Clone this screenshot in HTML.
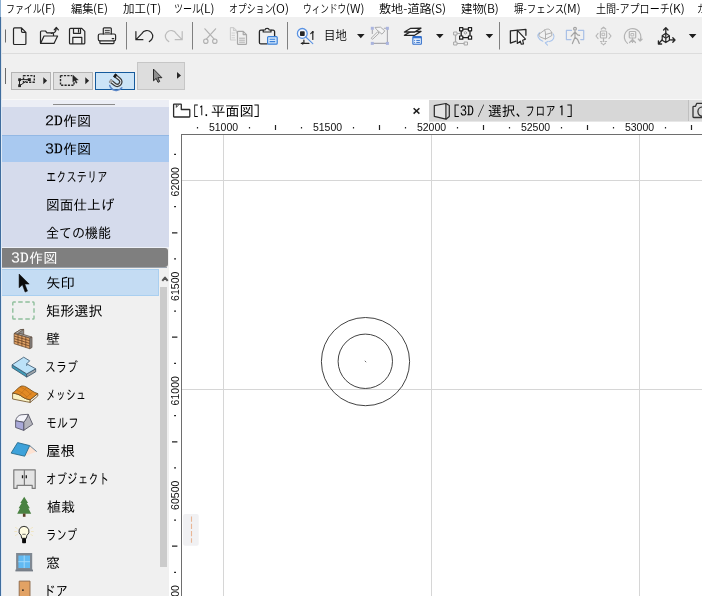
<!DOCTYPE html>
<html lang="ja">
<head>
<meta charset="utf-8">
<title>ARCHICAD</title>
<style>
html,body{margin:0;padding:0;background:#fff;overflow:hidden}
#root{position:relative;width:702px;height:596px;overflow:hidden;background:#f0f0f0;font-family:"IPAGothic","Noto Sans CJK JP",sans-serif}
.t{position:absolute;white-space:pre;line-height:1;transform-origin:0 50%}
.n{font-family:"Noto Sans CJK JP","IPAGothic",sans-serif;font-weight:350}
.s{display:inline-block;transform-origin:0 50%}
#txt{position:absolute;left:0;top:0;width:702px;height:596px;will-change:opacity}
.b{position:absolute}
svg{position:absolute;left:0;top:0;overflow:visible}
</style>
</head>

<body>
<div id="root">
<!-- menu bar -->
<div class="b" style="left:0;top:0;width:702px;height:17px;background:#fff"></div>
<!-- toolbars -->
<div class="b" style="left:0;top:17px;width:702px;height:83px;background:#f0f0f0"></div>
<div class="b" style="left:0;top:53px;width:702px;height:1px;background:#dcdcdc"></div>
<div class="b" style="left:0;top:99px;width:702px;height:1px;background:#f8f8f8"></div>
<!-- toolbar2 buttons -->
<div class="b" style="left:11px;top:72px;width:38px;height:16px;background:#e1e1e1;border:1px solid #b4b4b4"></div>
<div class="b" style="left:53px;top:72px;width:38px;height:16px;background:#e1e1e1;border:1px solid #b4b4b4"></div>
<div class="b" style="left:95px;top:72px;width:38px;height:16px;background:#cce4f7;border:1px solid #155a9c"></div>
<div class="b" style="left:137px;top:62px;width:46px;height:26px;background:#dddddd;border:1px solid #c6c6c6"></div>
<svg width="702" height="100" viewBox="0 0 702 100" fill="none" stroke="#262626" stroke-width="1.200" stroke-linecap="round" stroke-linejoin="round">
<!-- grips -->
<path d="M5.500 29.500V42.500M5.500 68V84" stroke="#6a6a6a" stroke-width="1" stroke-linecap="butt"/>
<!-- separators -->
<path d="M126.500 22V49.500M192.500 22V49.500M287.500 22V49.500M499.500 22V49.500" stroke="#808080" stroke-width="1" stroke-linecap="butt"/>
<!-- new -->
<path d="M14.500 27.900h7l4.400 4.400v11.200a1 1 0 0 1-1 1h-10.400a1 1 0 0 1-1-1v-14.600a1 1 0 0 1 1-1zM21.500 28v3.300a1 1 0 0 0 1 1h3.300"/>
<!-- open -->
<path d="M40.500 43v-11a1 1 0 0 1 1-1h4l1.500 1.800h5.500a1 1 0 0 1 1 1v2.200M40.600 43.400l3.400-7.400h13.600l-3.600 7.400zM51.300 33.400c3 0 4.800-2 5-5.400M54.200 29.800l2.100-2.300 2.100 2.300"/>
<!-- save -->
<path d="M70.500 28.400h11.300l3 3v11.500a1 1 0 0 1-1 1h-13.300a1 1 0 0 1-1-1v-13.500a1 1 0 0 1 1-1zM73.500 28.500v4.800h7v-4.800M78.500 29.500v2.500M72.800 43.800v-6.500h9v6.500"/>
<!-- print -->
<path d="M103.300 34v-5.300a.8 .8 0 0 1 .8-.8h6.400a.8 .8 0 0 1 .8 .8v5.300"/>
<path d="M105.200 30.400h4.200M105.200 32.300h4.200" stroke-width=".9"/>
<rect x="98.300" y="34" width="17.300" height="6.800" rx="1.600"/>
<path d="M99.900 41v1.800a.8 .8 0 0 0 .8 .8h12.500a.8 .8 0 0 0 .8-.8v-1.800M112.200 38.600h1.500"/>
<!-- undo -->
<path d="M135.900 31.600v8.100h7M136.300 39.300l5.500-5.700a5.800 5.800 0 1 1 7.500 8"/>
<!-- redo (disabled) -->
<path d="M182.200 31.600v8.100h-7M181.800 39.300l-5.500-5.700a5.800 5.800 0 1 0-7.500 8" stroke="#bcbcbc"/>
<!-- cut (disabled) -->
<g stroke="#b2b2b2"><path d="M204.900 28.800l9.300 10.400M215.600 28.800l-9.300 10.400"/><circle cx="205.800" cy="41.200" r="2.200"/><circle cx="214.800" cy="41.200" r="2.200"/></g>
<!-- copy (disabled) -->
<g stroke="#cdcdcd" stroke-width="1.100"><path d="M236.400 33v-2.500l-2.900-2.900h-2.600a.5 .5 0 0 0-.5 .5v11.400a.5 .5 0 0 0 .5 .5h4.500M233.500 27.800v2.700h2.700"/><path d="M232 33h2.500M232 35.400h2.500M232 37.800h2.500" stroke-width=".9"/></g>
<g stroke="#a8a8a8" stroke-width="1.200"><path d="M238 31.300h5.200l3.300 3.300v9.200a.5 .5 0 0 1-.5 .5h-8a.5 .5 0 0 1-.5-.5v-12a.5 .5 0 0 1 .5-.5zM243.200 31.500v3.100h3.100" fill="#f0f0f0"/><path d="M239.500 38.200h5M239.500 40.200h5M239.500 42.200h5" stroke-width=".9"/></g>
<!-- paste -->
<path d="M263 30.200h-2.100a1.500 1.500 0 0 0-1.500 1.500v10.700a1.500 1.500 0 0 0 1.500 1.500h6M271.200 30.200h1.900a1.500 1.500 0 0 1 1.500 1.500v4.300" stroke-width="1.300"/>
<path d="M263.200 32v-2h1.800c.2-2.300 4-2.300 4.200 0h1.800v2z" stroke-width="1.200"/>
<rect x="267.600" y="36.600" width="9.600" height="7.600" rx="1" stroke="#3a80d8" fill="#d4e7fb"/>
<path d="M269.600 39.300h5.600M269.600 41.600h5.600" stroke="#3a80d8" stroke-width="1.100" stroke-linecap="butt"/>
<!-- zoom to selection -->
<circle cx="302.300" cy="33.400" r="4.900" stroke="#5a92e2" stroke-width="1.300" fill="#f4f8fd"/>
<rect x="300" y="31.300" width="4.700" height="4.700" rx=".8" fill="#262626" stroke="none"/>
<path d="M305.800 37l7 6.600" stroke="#5a92e2" stroke-width="1.100"/>
<path d="M312.800 32v7.400M310.700 33.600l2.100-1.800M303.900 40v3.400h5M301.300 43.400h2.600" stroke="#262626" stroke-width="1.200"/>
<circle cx="312.800" cy="31.900" r="1" fill="#262626" stroke="none"/>
<path d="M303.200 41.700l-2.200 1.700 2.200 1.700z" fill="#262626" stroke="none"/>
<!-- dropdown arrows -->
<g fill="#1e1e1e" stroke="none"><path d="M357 34h7.600l-3.800 4.200zM436 34h7.600l-3.800 4.200zM485.600 34h7.600l-3.800 4.200zM688.800 34h7.600l-3.800 4.200z"/></g>
<!-- hammer (disabled bluish) -->
<path d="M384.300 28.300h3.100v15.100h-15.100M372.300 30v3.500" stroke="#a9a9ae" stroke-width="1.100"/>
<path d="M377.300 32.100l-5.900 5.900a1 1 0 0 0 1.400 1.100l6.100-5.800z" stroke="#a4a4a4" stroke-width=".9" fill="#f4f4f4"/>
<path d="M375.400 27.400l5.200-.2 4.200 3.700-2.800 3.300-5-4.200z" stroke="#a4a4a4" stroke-width=".9" fill="#f4f4f4"/>
<g fill="#aab4de" stroke="none"><rect x="370.800" y="26.800" width="3" height="3"/><rect x="385.900" y="26.800" width="3" height="3"/><rect x="370.800" y="41.900" width="3" height="3"/><rect x="385.900" y="41.900" width="3" height="3"/></g>
<!-- layers -->
<path d="M404.400 35.300l6.300-3.700 10.300-.2-6.400 3.900z" fill="#fafafa" stroke-width="1.300"/>
<path d="M404.400 32l6.300-3.700 10.300-.2-6.400 3.900z" fill="#fafafa" stroke-width="1.300"/>
<rect x="412.300" y="36.100" width="9.600" height="8.700" rx="1" stroke="none" fill="#326fcb"/>
<rect x="413.400" y="38.300" width="7.400" height="5.400" fill="#eaf4ff" stroke="none"/>
<path d="M414.200 40.400h.9M416.300 40.400h3.600M414.200 42.400h.9M416.300 42.400h3.600" stroke="#326fcb" stroke-width="1" stroke-linecap="butt"/>
<!-- group suspend -->
<path d="M455.500 35v8.500h9.500M457.500 33.500h2" stroke="#a8a8a8"/>
<g fill="#f0f0f0" stroke="#a8a8a8" stroke-width="1"><rect x="454" y="32" width="3" height="3"/><rect x="454" y="42" width="3" height="3"/><rect x="464.500" y="42" width="3" height="3"/></g>
<rect x="461.200" y="29.200" width="8.800" height="8.400" stroke="#1e1e1e" stroke-width="1.300" fill="#f0f0f0"/>
<g fill="#fff" stroke="#1e1e1e" stroke-width="1.200"><rect x="459.600" y="27.600" width="3.200" height="3.200"/><rect x="468.400" y="27.600" width="3.200" height="3.200"/><rect x="459.600" y="36" width="3.200" height="3.200"/><rect x="468.400" y="36" width="3.200" height="3.200"/></g>
<circle cx="465.400" cy="32.800" r="1.200" stroke="#999" stroke-width=".9"/>
<!-- select element -->
<path d="M510.400 30.800l15.500-1.500v6M510.400 30.800v12.300l5.600-2" stroke-width="1.300"/>
<path d="M517.300 30.300v13.200l3-2.400 .9 3.100 2.300-.4-.8-3.500 2.800-1.200z" fill="#fafafa" stroke-width="1.200"/>
<!-- orbit (disabled) -->
<path d="M539.400 32.600c-2.800 2.600-1.800 6.400 3.400 8.600M549.500 41.600c4-1.400 5.600-4.600 3.800-7.600M548.300 41.300l-3 1.500 2.200 2.300" stroke="#a9c4ec" stroke-width="1.100"/>
<path d="M539.300 33.900l5.400-3.900c1.500-.9 2.700-1 4-.8 1.400.5 2.400 1.800 3.100 3.600v2.800l-6.300 3.500-5.600-2.300c-.9-.8-1.200-1.900-.6-2.900zM544.700 30c.6 1.400.9 2.900.8 4.500l6.300-1.700M545.500 34.500v4.600" stroke="#a6a6a6" stroke-width=".9" fill="#f2f2f2"/>
<!-- walk (disabled) -->
<path d="M571.500 30.400h-5.100v9.200h4.600M578.500 30.400h5.200v9.200h-3" stroke="#a9c0e6"/>
<g stroke="#a2a2a2"><circle cx="575" cy="28.700" r="1.400"/><path d="M575 31v6.200l-2.600 6.400M575 37.200l2.600 2.300 1.700 4M571.200 36.200l3.800-4.400 2.600 3 2 .5"/></g>
<!-- look (disabled) -->
<g stroke="#b4b4b4"><rect x="600.400" y="31" width="6.200" height="7" rx="1"/><rect x="602.300" y="33.200" width="2.400" height="2.400" stroke-width=".9"/><path d="M603.500 38v3.500M598 33.500l-2 2.500 2 2.500M609 33.500l2 2.500-2 2.500M601.300 29l2.200-1.800 2.200 1.800"/><path d="M601.300 43l2.200 1.800 2.200-1.800" stroke-dasharray="1 1.200"/><path d="M600.500 41.500h6" stroke-dasharray="1 1.500"/></g>
<!-- rotate (disabled) -->
<g stroke="#b4b4b4"><path d="M627.500 43.400a8.300 8.300 0 1 1 12.600-3M638.300 39l1.800 2 2-1.800"/><rect x="629.300" y="31.500" width="6.400" height="6.500" rx=".8"/><rect x="631.300" y="33.500" width="2.400" height="2.400" stroke-width=".9"/><path d="M632.500 38v4.500M632.500 39.500l-3 3M632.500 39.500l3 3"/></g>
<!-- 3D axes -->
<path d="M665.800 36.500v-8.700M663.600 30l2.200-2.400 2.200 2.400M662 40l-3.600 3.800M658.400 40.800v3.200h3.200M669.800 39.800l5 .2M672.800 37.700l2.200 2.300-2.200 2.300" stroke-width="1.300"/>
<path d="M662.200 35.800l3.600-2.600 3.600 2.600v4.400l-3.600 2.400-3.600-2.400zM662.200 35.800l3.600 2.400 3.600-2.400M665.800 38.200v4.400" stroke-width="1.200"/>
<!-- toolbar2 icons -->
<g stroke="#262626" stroke-width="1.100" stroke-linecap="butt">
<path d="M23.500 75.600h10.800v6.600h-10.800z" stroke-dasharray="2.200 1.200" stroke-width="1.400"/>
<path d="M19.500 80v5.500M20 79.600h9.500M19.800 85.600l6.500-4.500" stroke-width="1"/>
<rect x="18.200" y="78.300" width="2.800" height="2.800" fill="#262626" stroke="none"/><rect x="27.800" y="78.200" width="3" height="2.800" fill="#262626" stroke="none"/><rect x="18.200" y="84.300" width="2.800" height="2.800" fill="#262626" stroke="none"/>
<path d="M60.500 75.600h11.500M60.500 75.600v9.600h13.500v-3" stroke-dasharray="2.200 1.200" stroke-width="1.400"/>
<path d="M72.800 75v7l1.900-1.600 1.400 2.800 1.100-.5-1.400-2.800h2.500z" fill="#262626" stroke-width=".4"/>
</g>
<g fill="#262626" stroke="none"><path d="M43.300 77.200l3.800 3.500-3.800 3.500zM85.300 77.200l3.800 3.500-3.800 3.500zM177 72l4 3.400-4 3.400z"/></g>
<!-- magnet -->
<g transform="translate(116.6 81.3) rotate(38) scale(1.25)">
<path d="M-2 5.200a5.600 5.600 0 0 0 8.800-4.500" stroke="#5b86c6" stroke-width="1.200" transform="translate(-.3 .8)"/>
<path d="M-4.600 -2.800H.7a2.800 2.800 0 0 1 0 5.600H-4.600" stroke="#3a3a3a" stroke-width="2.900" stroke-linecap="butt"/>
<path d="M-2.600 -2.800H.7a2.800 2.800 0 0 1 0 5.600H-2.600" stroke="#e8eef5" stroke-width=".9" stroke-linecap="butt"/>
<path d="M-4.600 -2.800h2" stroke="#1a1a1a" stroke-width="2.900" stroke-linecap="butt"/>
<path d="M-4.600 2.800h2" stroke="#a9a9a9" stroke-width="2.900" stroke-linecap="butt"/>
</g>
<!-- arrow cursor big -->
<path d="M153.500 69.500v11.300l2.700-2.400 1.800 3.900 1.700-.8-1.800-3.800h3.600z" fill="#909090" stroke="#262626" stroke-width="1"/>
</svg>

<!-- left panel -->
<div class="b" style="left:0;top:100px;width:169px;height:7px;background:#eceef5"></div>
<div class="b" style="left:53px;top:104px;width:62px;height:1px;background:#8c8c8c"></div>
<div class="b" style="left:0;top:107px;width:169px;height:141px;background:#d5dbec"></div>
<div class="b" style="left:0;top:135px;width:169px;height:27px;background:#a9c9f0;border-top:1px solid #93b8e4;box-sizing:border-box"></div>
<div class="b" style="left:0;top:248px;width:169px;height:348px;background:#f0f0f0"></div>
<div class="b" style="left:1px;top:247px;width:168px;height:1px;background:#eef1f8"></div>
<div class="b" style="left:1px;top:267px;width:166px;height:1px;background:#9aa3ad"></div>
<div class="b" style="left:1px;top:248px;width:167px;height:19px;background:#7f7f7f;border-radius:0 3px 3px 0"></div>
<div class="b" style="left:1px;top:269px;width:158px;height:27px;background:#c4dcf3;border:1px solid #a9cff0;border-left:0;box-sizing:border-box"></div>
<!-- scrollbar -->
<div class="b" style="left:160px;top:268px;width:8px;height:328px;background:#f0f0f0"></div>
<div class="b" style="left:160px;top:287px;width:7px;height:280px;background:#cbcbcb"></div>
<!-- left window edge -->
<div class="b" style="left:0;top:0;width:1px;height:17px;background:#8db0d2"></div>
<div class="b" style="left:0;top:17px;width:1px;height:579px;background:#3f6d9e"></div>
<div class="b" style="left:1px;top:17px;width:1px;height:83px;background:#dde3ea"></div>
<div class="b" style="left:1px;top:100px;width:1px;height:496px;background:#dfe9f5"></div>
<svg width="170" height="596" viewBox="0 0 170 596" fill="none" stroke="#222" stroke-width="1" stroke-linejoin="round">
<path d="M162.300 280.800l2.700-3.200 2.700 3.200" stroke="#555" stroke-width="2"/>
<!-- arrow -->
<path d="M19.100 274v13.800l3.300-3 2.700 7.300 2.400-1-2.700-7h4.400z" fill="#0a0a0a" stroke="#0a0a0a" stroke-width=".5"/>
<!-- marquee -->
<path d="M12.800 305.400V302.800a.8 .8 0 0 1 .8-.8H15.800M18.200 302H22.700M25.300 302H29.800M32.200 302H33.200a.8 .8 0 0 1 .8 .8V305.400M34 308.300V312.800M34 315.600V318.200a.8 .8 0 0 1-.8 .8H32.200M29.800 319H25.300M22.700 319H18.200M15.800 319H13.600a.8 .8 0 0 1-.8-.8V315.600M12.800 312.800V308.300" stroke="#8fbf9c" stroke-width="1.400" stroke-linecap="butt"/>
<!-- wall -->
<g stroke="#5a4636" stroke-width=".7">
<path d="M14.100 333.600l6.500-4 3.100-.2v6.500l-3.200 1.500z" fill="#8c8c8c"/>
<path d="M14.100 333.600l6.500-4 3.100-.2-6.500 4.500z" fill="#b4b4b4"/>
<path d="M17.200 334.500l12.500 3.600 2.300-1-12-3.700z" fill="#a8a8a8"/>
<path d="M29.700 338.100l2.300-1v10.400l-2.300 1.200z" fill="#8a8a8a"/>
<path d="M14.100 333.600l15.600 4.500v10.600l-15.600-5z" fill="#e2a468"/>
<path d="M14.100 336.100l15.600 4.600M14.100 338.600l15.600 4.800M14.100 341.100l15.600 4.900M18 334.700v10.200M21.900 335.900v10.300M25.800 337v10.400" stroke="#6b4426" stroke-width=".8"/>
</g>
<!-- slab -->
<g stroke="#36536a" stroke-width=".8">
<path d="M12.100 364.800l14.600 9.100v3.200l-14.600-9.400z" fill="#3f9bb8"/>
<path d="M26.700 373.900l9-5.100v3l-9 5.300z" fill="#a0a4a8"/>
<path d="M12.100 364.800l11.600-7.600 6 3.600-3 3 9 5-9 5.100z" fill="#bce2f8"/>
<path d="M26.700 363.800v2.200" stroke-width=".7"/>
</g>
<!-- mesh -->
<g stroke="#6a4a20" stroke-width=".8">
<path d="M12.600 393.100c4 .5 7 1.500 9.500 3.500 2.500 1.800 5 2.800 8.100 3.100v2.700l-4-.7-13.600-2.700z" fill="#faf2c4"/>
<path d="M30.200 399.700l7.600-6.100v2.400l-7.600 6.400z" fill="#f4f0e8"/>
<path d="M12.600 393.100c3-2 5.500-5.500 8.500-7 2.500-.6 4.500.6 6.100 1.500 3 1.800 6.500 5 10.600 6l-7.600 6.100c-3-.3-5.600-1.300-8.100-3.100-2.500-2-5.500-3-9.500-3.500z" fill="#e28a24"/>
<path d="M16.500 390.300c3.500.8 7 3 10.500 6.800M20 387.200c4 1 8 4 11.500 8M19.500 395c2.500-2.500 5-5.500 7.200-7.500M25 398.500c2.500-2 5-4.500 7.500-6.500" stroke="#b86a18" stroke-width=".6"/>
</g>
<!-- morph -->
<g stroke="#4a4a5a" stroke-width=".8">
<path d="M28.200 414.300l4.500 10-9 6.100v-8.100c2.500-3 3.800-5.500 4.500-8z" fill="#b4b4bc"/>
<path d="M15.600 420.800c.8-3.500 2.800-5.500 5.500-6l7.100-.5c-.7 2.500-2 5-4.500 8z" fill="#f4f4fa"/>
<path d="M15.600 420.800l8.100 1.500v8.100l-8.100-2.900z" fill="#a9a9d8"/>
</g>
<!-- roof -->
<path d="M29.700 445.600l7 6-12 4.600z" fill="#fde2d2" stroke="none"/>
<path d="M29.700 445.600l7 6" stroke="#5a7a92" stroke-width=".9"/>
<path d="M11.100 453.100l6.500-10.500 12.100 3-5 10.600z" fill="#3ea2da" stroke="#2a6c8c" stroke-width=".9"/>
<!-- object (cabinet) -->
<g stroke="#7c7c7c" stroke-width="1.200"><path d="M13.800 469.800h21.400v18.600h-3v-3h-15.100v3h-3.300z" fill="#e4e4e4"/><path d="M24.400 470v15.200"/><path d="M22.500 475.300v3M26.300 475.300v3" stroke="#1a1a1a" stroke-width="1.300"/></g>
<!-- tree -->
<g stroke="none"><path d="M24.200 496.800l-3.900 6.200h1.300l-3 5.300h1.400l-2.800 5.400h14l-2.800-5.400h1.400l-3-5.300h1.300z" fill="#4a8242"/><rect x="22.900" y="513.500" width="2.600" height="3.300" fill="#5c4028"/></g>
<!-- lamp -->
<g><path d="M24 526.300a5 5 0 0 1 2.900 9.100l-.6 2.900h-4.600l-.6-2.900a5 5 0 0 1 2.900-9.100z" fill="#fffce2" stroke="#1a1a1a" stroke-width=".9"/><path d="M22.300 534.300h3.400" stroke="#555" stroke-width=".8"/><rect x="22.100" y="538.300" width="3.900" height="4.900" rx=".8" fill="#0a0a0a" stroke="none"/><path d="M15 527.300l2.500 1.300M14.300 531.500h2.700M15 535.700l2.500-1.300M33 527.300l-2.500 1.300M33.700 531.500h-2.700M33 535.700l-2.500-1.300" stroke="#f0e2b8" stroke-width=".8"/></g>
<!-- window -->
<g stroke="none"><rect x="16.100" y="553" width="16.100" height="17" fill="#7f8892"/><rect x="15.400" y="569.600" width="17.600" height="1.800" fill="#767e88"/><rect x="18.400" y="555.500" width="11.600" height="12.500" fill="#62baf2"/><path d="M24.200 555.500v12.500M18.400 561.700h11.600" stroke="#a8dcfa" stroke-width=".9"/></g>
<!-- door -->
<g><rect x="19.200" y="581.100" width="10.800" height="16" fill="#e2a264" stroke="#8a6648" stroke-width=".9"/><path d="M22 590.200h1.800" stroke="#1a1a1a" stroke-width="1.200"/></g>
</svg>

<!-- drawing area -->
<div class="b" style="left:169px;top:100px;width:533px;height:496px;background:#fff"></div>
<div class="b" style="left:429px;top:100px;width:273px;height:21px;background:#d7d7d7"></div>
<div class="b" style="left:429px;top:121px;width:273px;height:1px;background:#e7e7e7"></div>
<div class="b" style="left:689px;top:100px;width:13px;height:21px;background:#dcdcdc"></div>
<div class="b" style="left:688px;top:100px;width:1px;height:21px;background:#bfbfbf"></div>
<svg width="702" height="596" viewBox="0 0 702 596" fill="none" stroke="#222" stroke-width="1" style="will-change:opacity">
<!-- grid -->
<path d="M223.500 135V596M431.500 135V596M639.500 135V596M182 180.500H702M182 389.500H702" stroke="#d6d6d6"/>
<!-- frame -->
<path d="M181 134.500H702M181.500 134V596" stroke="#6e6e6e"/>
<!-- tab icons -->
<path d="M174.100 104.100h6.700a.5 .5 0 0 1 .5 .5v4.900h8a.5 .5 0 0 1 .5 .5v6.500a.5 .5 0 0 1-.5 .5h-15.200a.5 .5 0 0 1-.5-.5v-11.900a.5 .5 0 0 1 .5-.5z" stroke="#2a2a2a" stroke-width="1.300" stroke-linejoin="round"/>
<path d="M178.900 104.600l-2.600 2.800v-2.800" stroke="#2a2a2a" stroke-width=".9"/>
<path d="M413.600 108.300l5.800 5.300M419.400 108.300l-5.800 5.300" stroke="#1e1e1e" stroke-width="1.500"/>
<path d="M434.300 105.600l11.600-2.100v15.700l-11.600-2.900z" fill="#e4e4e4" stroke="#2a2a2a" stroke-width="1.200" stroke-linejoin="round"/>
<path d="M445.900 103.500l3.400 1.900v11.100l-3.400 2.700" stroke="#2a2a2a" stroke-width="1.200" stroke-linejoin="round"/>
<path d="M703 103.400h-6.300l-1.200 2.900h-1.700a.8 .8 0 0 0-.8 .8v9.600a.8 .8 0 0 0 .8 .8h9.200" stroke="#333" stroke-width="1.300" stroke-linejoin="round"/>
<circle cx="702.600" cy="111.600" r="4.700" stroke="#333" stroke-width="1.300"/>
<!-- circles -->
<circle cx="365.500" cy="361.600" r="44.100" stroke="#2e2e2e" stroke-width=".9"/>
<circle cx="365.300" cy="361.300" r="27.200" stroke="#2e2e2e" stroke-width=".9"/>
<path d="M364.800 360.800l1.400 1.400" stroke="#444" stroke-width=".8"/>
<!-- horizontal ruler ticks -->
<g stroke="#222" stroke-width="1.200">
<path d="M197.500 126.900v1.500M249.500 126.900v1.500M301.500 126.900v1.500M353.500 126.900v1.500M405.500 126.900v1.500M457.500 126.900v1.500M509.500 126.900v1.500M561.500 126.900v1.500M613.500 126.900v1.500M665.500 126.900v1.500"/>
<path d="M275.500 125v5M379.500 125v5M483.500 125v5M587.500 125v5M691.500 125v5"/>
<!-- vertical ruler ticks -->
<path d="M174.100 154.4h1.900M174.100 206.6h1.900M174.100 258.9h1.900M174.100 311.1h1.900M174.100 363.4h1.900M174.100 415.6h1.900M174.100 467.9h1.900M174.100 520.1h1.900M174.100 572.4h1.900"/>
<path d="M172 232.8h5.400M172 337.2h5.400M172 441.8h5.400M172 546.2h5.400"/>
</g>
<!-- ruler labels -->
<g font-family='"Liberation Sans",sans-serif' font-size="10.5" fill="#111" stroke="none" text-anchor="middle">
<text x="223.500" y="131.200">51000</text><text x="327.500" y="131.200">51500</text><text x="431.500" y="131.200">52000</text><text x="535.500" y="131.200">52500</text><text x="639.500" y="131.200">53000</text>
<text transform="translate(178.600 181.800) rotate(-90)">62000</text><text transform="translate(178.600 286.300) rotate(-90)">61500</text><text transform="translate(178.600 390.800) rotate(-90)">61000</text><text transform="translate(178.600 495.300) rotate(-90)">60500</text><text transform="translate(178.600 599.800) rotate(-90)">60000</text>
</g>
<!-- small marker -->
<rect x="183.100" y="514.100" width="15.600" height="31.700" rx="2" fill="#f1f1f3" stroke="none"/>
<path d="M191.500 516.600V542.800" stroke="#e9b696" stroke-width="1.100" stroke-dasharray="5.200 2"/>
</svg>

<!-- text -->
<div id="txt">
<span class="t n" style="left:6.2px;top:2.9px;font-size:11.6px;"><span class="s" style="transform:scaleX(0.768);margin-right:-11.2px;">ファイル</span><span class="s" style="transform:scaleX(1.040);">(F)</span></span>
<span class="t n" style="left:70.9px;top:2.9px;font-size:11.6px;"><span class="s" style="transform:scaleX(0.970);margin-right:-1.0px;">編集</span><span class="s" style="transform:scaleX(1.040);">(E)</span></span>
<span class="t n" style="left:122.8px;top:2.9px;font-size:11.6px;"><span class="s" style="transform:scaleX(0.991);margin-right:-0.5px;">加工</span><span class="s" style="transform:scaleX(1.040);">(T)</span></span>
<span class="t n" style="left:173.8px;top:2.9px;font-size:11.6px;"><span class="s" style="transform:scaleX(0.779);margin-right:-8.5px;">ツール</span><span class="s" style="transform:scaleX(1.040);">(L)</span></span>
<span class="t n" style="left:228.6px;top:2.9px;font-size:11.6px;"><span class="s" style="transform:scaleX(0.763);margin-right:-14.7px;">オプション</span><span class="s" style="transform:scaleX(1.040);">(O)</span></span>
<span class="t n" style="left:303.3px;top:2.9px;font-size:11.6px;"><span class="s" style="transform:scaleX(0.745);margin-right:-15.6px;">ウィンドウ</span><span class="s" style="transform:scaleX(1.040);">(W)</span></span>
<span class="t n" style="left:378.6px;top:2.9px;font-size:11.6px;"><span class="s" style="transform:scaleX(1.045);margin-right:1.7px;">敷地-道路</span><span class="s" style="transform:scaleX(1.040);">(S)</span></span>
<span class="t n" style="left:460.7px;top:2.9px;font-size:11.6px;"><span class="s" style="transform:scaleX(0.983);margin-right:-0.7px;">建物</span><span class="s" style="transform:scaleX(1.040);">(B)</span></span>
<span class="t n" style="left:513.8px;top:2.9px;font-size:11.6px;"><span class="s" style="transform:scaleX(0.815);margin-right:-13.0px;">塀-フェンス</span><span class="s" style="transform:scaleX(1.040);">(M)</span></span>
<span class="t n" style="left:596.4px;top:2.9px;font-size:11.6px;"><span class="s" style="transform:scaleX(0.866);margin-right:-12.5px;">土間-アプローチ</span><span class="s" style="transform:scaleX(1.040);">(K)</span></span>
<span class="t n" style="left:697.2px;top:2.9px;font-size:11.6px;transform:scaleX(0.750);">カ</span>
<span class="t n" style="left:324.0px;top:29.4px;font-size:12px;transform:scaleX(0.950);">目地</span>
<span class="t" style="left:193.2px;top:103.8px;font-size:14px;"><span class="s" style="transform:scaleX(0.819);margin-right:-10.1px;">[1. </span><span class="s" style="transform:scaleX(1.022);margin-right:0.2px;">平面図</span><span class="s">]</span></span>
<span class="t" style="left:453.0px;top:103.8px;font-size:14px;"><span class="s" style="margin-right:-3.6px;">[3D </span><span class="s" style="margin-right:-3.0px;">/ </span><span class="s" style="transform:scaleX(0.987);margin-right:-5.9px;">選択、</span><span class="s" style="transform:scaleX(0.728);margin-right:-15.2px;">フロア </span><span class="s" style="margin-right:1.0px;">1</span><span class="s">]</span></span>
<span class="t" style="left:45.3px;top:113.8px;font-size:14px;"><span class="s" style="transform:scaleX(1.292);margin-right:3.6px;">2D</span><span class="s" style="transform:scaleX(1.008);">作図</span></span>
<span class="t" style="left:45.3px;top:141.9px;font-size:14px;"><span class="s" style="transform:scaleX(1.292);margin-right:3.6px;">3D</span><span class="s" style="transform:scaleX(1.008);">作図</span></span>
<span class="t" style="left:46.4px;top:169.5px;font-size:14px;transform:scaleX(0.733);">エクステリア</span>
<span class="t" style="left:46.1px;top:198.0px;font-size:14px;transform:scaleX(0.978);">図面仕上げ</span>
<span class="t" style="left:46.2px;top:225.6px;font-size:14px;transform:scaleX(0.929);">全ての機能</span>
<span class="t" style="left:11.2px;top:250.7px;font-size:14px;color:#fff;"><span class="s" style="transform:scaleX(1.277);margin-right:3.7px;">3D</span><span class="s" style="transform:scaleX(1.019);">作図</span></span>
<span class="t" style="left:46.0px;top:275.7px;font-size:14px;transform:scaleX(1.038);">矢印</span>
<span class="t" style="left:46.0px;top:303.7px;font-size:14px;transform:scaleX(1.013);">矩形選択</span>
<span class="t" style="left:46.0px;top:331.7px;font-size:14px;">壁</span>
<span class="t" style="left:45.4px;top:359.7px;font-size:14px;transform:scaleX(0.782);">スラブ</span>
<span class="t" style="left:45.6px;top:387.7px;font-size:14px;transform:scaleX(0.712);">メッシュ</span>
<span class="t" style="left:46.2px;top:415.7px;font-size:14px;transform:scaleX(0.787);">モルフ</span>
<span class="t" style="left:46.0px;top:443.7px;font-size:14px;transform:scaleX(1.038);">屋根</span>
<span class="t" style="left:46.2px;top:471.7px;font-size:14px;transform:scaleX(0.753);">オブジェクト</span>
<span class="t" style="left:47.0px;top:499.7px;font-size:14px;transform:scaleX(1.007);">植栽</span>
<span class="t" style="left:45.5px;top:527.7px;font-size:14px;transform:scaleX(0.743);">ランプ</span>
<span class="t" style="left:46.0px;top:555.7px;font-size:14px;">窓</span>
<span class="t" style="left:42.5px;top:583.7px;font-size:14px;transform:scaleX(0.895);">ドア</span>
</div>
</div>
</body>
</html>
